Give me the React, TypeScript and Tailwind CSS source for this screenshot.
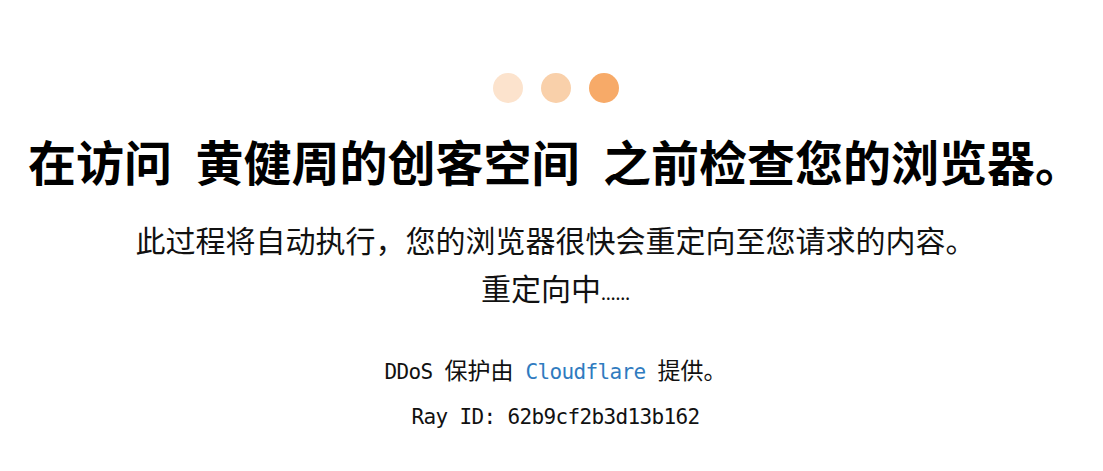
const cjk = "font-['Noto_Sans','Noto_Sans_CJK_SC',sans-serif]";
const mono = "font-['DejaVu_Sans_Mono','Noto_Sans_CJK_SC',monospace]";

const Bubbles = () => (
  <div className="flex justify-center gap-[18px]">
    <span className="block w-[30px] h-[30px] rounded-full bg-[#fce3cd]" />
    <span className="block w-[30px] h-[30px] rounded-full bg-[#f9d0aa]" />
    <span className="block w-[30px] h-[30px] rounded-full bg-[#f7aa68]" />
  </div>
);

export default function App() {
  return (
    <div className="w-full min-h-[471px] bg-white text-black text-center pt-[73px] pl-[8px]">
      <Bubbles />
      <h1 className={`${cjk} mt-[30px] text-[48px] leading-[60px] font-bold [word-spacing:11px]`}>
        <span>在访问</span> <span>黄健周的创客空间</span> <span>之前检查您的浏览器。</span>
      </h1>
      <div className={`${cjk} mt-[24px] text-[30px] leading-[48px] text-[#111]`}>
        <p>此过程将自动执行，您的浏览器很快会重定向至您请求的内容。</p>
        <p>
          重定向中<span className="text-[18px] font-medium">……</span>
        </p>
      </div>
      <div className={`${mono} mt-[30px] text-[21px] leading-[45px] tracking-[-0.64px] text-[#111]`}>
        <p>
          DDoS <span className="font-['Noto_Sans_CJK_SC',sans-serif] text-[23px] tracking-normal">保护由</span>{" "}
          <a href="#" className="text-[#2f7bbf] no-underline">Cloudflare</a>{" "}
          <span className="font-['Noto_Sans_CJK_SC',sans-serif] text-[23px] tracking-normal">提供。</span>
        </p>
        <p>Ray ID: 62b9cf2b3d13b162</p>
      </div>
    </div>
  );
}
